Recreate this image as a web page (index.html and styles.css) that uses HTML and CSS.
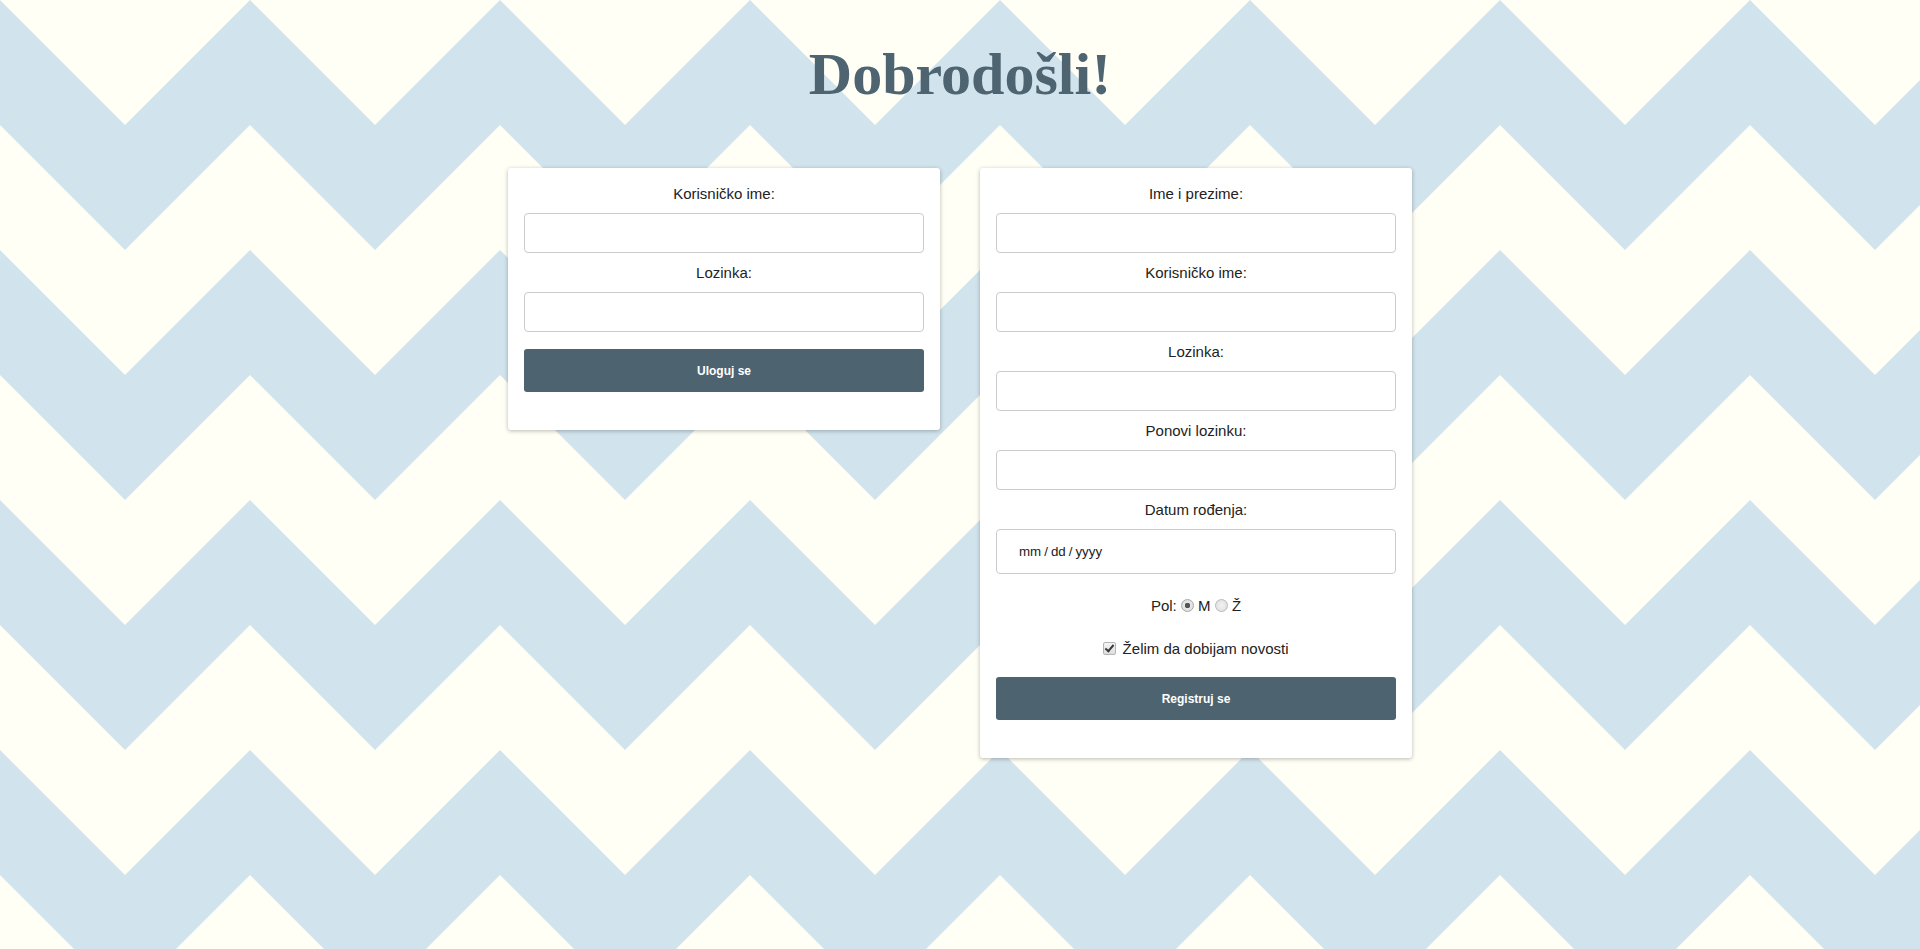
FILE: index.html
```html
<!DOCTYPE html>
<html lang="sr">
<head>
<meta charset="utf-8">
<title>Dobrodošli</title>
<link rel="stylesheet" href="styles.css">
</head>
<body>
<h1 class="title">Dobrodošli!</h1>
<main class="cards">
  <form class="card card-login">
    <label class="lbl" for="l-user">Korisničko ime:</label>
    <input class="inp" id="l-user" type="text">
    <label class="lbl" for="l-pass">Lozinka:</label>
    <input class="inp" id="l-pass" type="password">
    <button class="btn" type="button">Uloguj se</button>
  </form>
  <form class="card card-reg">
    <label class="lbl" for="r-name">Ime i prezime:</label>
    <input class="inp" id="r-name" type="text">
    <label class="lbl" for="r-user">Korisničko ime:</label>
    <input class="inp" id="r-user" type="text">
    <label class="lbl" for="r-pass">Lozinka:</label>
    <input class="inp" id="r-pass" type="password">
    <label class="lbl" for="r-pass2">Ponovi lozinku:</label>
    <input class="inp" id="r-pass2" type="password">
    <label class="lbl" for="r-date">Datum rođenja:</label>
    <input class="inp inp-date" id="r-date" type="date">
    <div class="row row-pol">Pol: <input class="radio" type="radio" name="pol" checked> M <input class="radio" type="radio" name="pol"> Ž</div>
    <div class="row row-check"><input class="check" type="checkbox" checked> Želim da dobijam novosti</div>
    <button class="btn btn-reg" type="button">Registruj se</button>
  </form>
</main>
</body>
</html>
```

FILE: styles.css
```css
html, body {
  margin: 0;
  padding: 0;
}
body {
  min-height: 949px;
  background-color: #fffff5;
  background-image: url("data:image/svg+xml,%3Csvg xmlns='http://www.w3.org/2000/svg' width='250' height='250'%3E%3Crect width='250' height='250' fill='%23fffff5'/%3E%3Cpolygon points='0,0 125,125 250,0 250,125 125,250 0,125' fill='%23d1e3ec'/%3E%3C/svg%3E");
  background-size: 250px 250px;
  font-family: "Liberation Sans", Arial, sans-serif;
  color: #222;
  overflow: hidden;
}
.title {
  margin: 0;
  padding-top: 40px;
  height: 69px;
  line-height: 69px;
  font-family: "Liberation Serif", "Times New Roman", serif;
  font-size: 60px;
  font-weight: bold;
  color: #4e6471;
  text-align: center;
}
.cards {
  display: flex;
  justify-content: center;
  align-items: flex-start;
  gap: 40px;
  margin-top: 59px;
}
.card {
  box-sizing: border-box;
  width: 432px;
  padding: 17px 16px 38px;
  background: #fff;
  border-radius: 3px;
  box-shadow: 0 1px 4px rgba(0, 0, 0, 0.28);
  display: flex;
  flex-direction: column;
  text-align: center;
}
.lbl {
  display: block;
  font-size: 15px;
  line-height: 18px;
  height: 18px;
  margin: 0 0 10px;
}
.inp {
  box-sizing: border-box;
  display: block;
  width: 100%;
  height: 40px;
  margin: 0 0 11px;
  padding: 0 20px;
  border: 1px solid #cbcbcb;
  border-radius: 4px;
  background: #fff;
  font-family: "Liberation Sans", Arial, sans-serif;
  font-size: 13px;
  outline: none;
}
.inp-date {
  height: 45px;
  margin-bottom: 23px;
  color: #222;
  padding-left: 21px;
  font-size: 13.33px;
}
.inp-date::-webkit-calendar-picker-indicator {
  display: none;
}
.inp-date::-webkit-datetime-edit {
  padding: 0;
}
.inp-date::-webkit-datetime-edit-text {
  padding: 0 2px;
}
.btn {
  display: block;
  width: 100%;
  height: 43px;
  margin-top: 6px;
  border: none;
  border-radius: 3px;
  background: #4e6370;
  color: #fff;
  font-family: "Liberation Sans", Arial, sans-serif;
  font-size: 12px;
  font-weight: bold;
}
.btn-reg {
  margin-top: 0;
}
.row {
  font-size: 15px;
  line-height: 18px;
  height: 18px;
}
.row-pol {
  margin-bottom: 25px;
}
.row-check {
  margin-bottom: 19px;
}
.radio {
  -webkit-appearance: none;
  appearance: none;
  box-sizing: border-box;
  width: 13px;
  height: 13px;
  margin: 0;
  border: 1px solid #b9b9b9;
  border-radius: 50%;
  background: radial-gradient(circle, #f2f2f2 0%, #dcdcdc 100%);
  vertical-align: -1px;
}
.radio:checked {
  background: radial-gradient(circle, #555 0 2.5px, #e8e8e8 3px, #d6d6d6 100%);
  border-color: #a8a8a8;
}
.check {
  -webkit-appearance: none;
  appearance: none;
  box-sizing: border-box;
  width: 13px;
  height: 13px;
  margin: 0 2px 0 0;
  border: 1px solid #b5b5b5;
  border-radius: 2px;
  background: linear-gradient(#f4f4f4, #dedede);
  vertical-align: -1px;
  position: relative;
}
.check:checked::after {
  content: "";
  position: absolute;
  left: 3px;
  top: 0px;
  width: 3px;
  height: 7px;
  border: solid #3a3a3a;
  border-width: 0 2px 2px 0;
  transform: rotate(40deg);
}
```
